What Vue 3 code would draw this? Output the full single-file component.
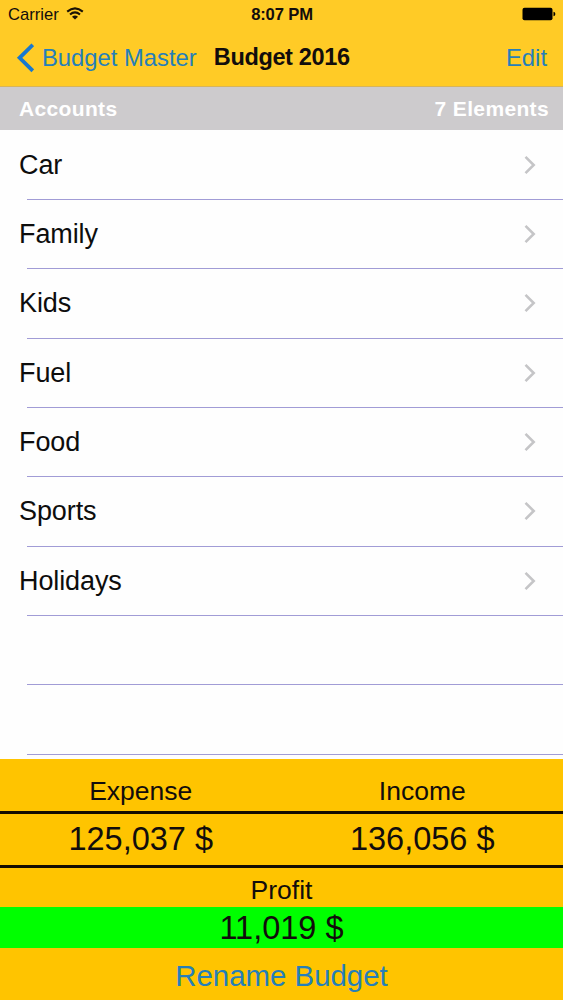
<template>
  <div class="screen">
    <header class="top">
      <div class="status-bar">
        <div class="carrier">
          <span>Carrier</span>
          <svg class="wifi" width="18" height="13" viewBox="0 0 18 13">
            <path d="M1.2 4.6 Q9 -2 16.8 4.6" />
            <path d="M4 7.5 Q9 3.3 14 7.5" />
            <path class="dot" d="M6 9.7 Q9 7.2 12 9.7 L9 12.6 Z" />
          </svg>
        </div>
        <span class="time">8:07 PM</span>
        <svg class="battery" width="34" height="14" viewBox="0 0 34 14">
          <rect x="0.5" y="0.8" width="30" height="12.4" rx="2" />
          <path d="M31.5 4.8 Q33.4 5.3 33.4 7 Q33.4 8.7 31.5 9.2 Z" />
        </svg>
      </div>
      <nav class="nav-bar">
        <button class="back">
          <svg width="18" height="30" viewBox="0 0 18 30">
            <path d="M16.8 1.8 L3.6 14.8 L16.8 27.8" />
          </svg>
          <span>Budget Master</span>
        </button>
        <h1>Budget 2016</h1>
        <button class="edit">Edit</button>
      </nav>
    </header>

    <div class="section-header">
      <span>Accounts</span>
      <span>{{ accounts.length }} Elements</span>
    </div>

    <ul class="list">
      <li v-for="account in accounts" :key="account" class="row">
        <span>{{ account }}</span>
        <svg width="12" height="20" viewBox="0 0 12 20">
          <path d="M1.5 1.8 L9.7 10 L1.5 18.2" />
        </svg>
      </li>
      <li v-for="n in 2" :key="n" class="row"></li>
    </ul>

    <footer class="summary">
      <div class="columns labels">
        <span>Expense</span>
        <span>Income</span>
      </div>
      <div class="columns amounts">
        <span>{{ format(expense) }}</span>
        <span>{{ format(income) }}</span>
      </div>
      <div class="profit-label">Profit</div>
      <div class="profit">{{ format(profit) }}</div>
      <button class="rename">Rename Budget</button>
    </footer>
  </div>
</template>

<script setup>
import { ref, computed } from 'vue'

const accounts = ref(['Car', 'Family', 'Kids', 'Fuel', 'Food', 'Sports', 'Holidays'])
const expense = ref(125037)
const income = ref(136056)
const profit = computed(() => income.value - expense.value)

const format = (value) => value.toLocaleString('en-US') + ' $'
</script>

<style>
body {
  margin: 0;
}
</style>

<style scoped>
.screen {
  display: flex;
  flex-direction: column;
  width: 563px;
  height: 1000px;
  overflow: hidden;
  background: #fefefe;
  color: #120d0c;
  font-family: "Liberation Sans", Arial, sans-serif;
}
button {
  padding: 0;
  border: none;
  background: none;
  font: inherit;
  color: #267fb9;
  cursor: pointer;
}
.top {
  height: 87px;
  flex: none;
  box-sizing: border-box;
  background: #ffcb26;
  border-bottom: 1px solid #d6b45c;
}
.status-bar {
  display: grid;
  grid-template-columns: 1fr auto 1fr;
  align-items: center;
  height: 28px;
  padding: 0 7px 0 8px;
  font-size: 16.6px;
}
.status-bar span {
  padding-top: 1px;
}
.carrier {
  display: flex;
  align-items: center;
  gap: 7px;
}
.wifi {
  margin-top: -2px;
}
.wifi path {
  fill: none;
  stroke: #1a1205;
  stroke-width: 2.1;
}
.wifi .dot {
  fill: #1a1205;
  stroke: none;
}
.time {
  font-weight: bold;
  letter-spacing: -0.15px;
}
.battery {
  justify-self: end;
  fill: #000;
}
.nav-bar {
  display: flex;
  align-items: center;
  height: 59px;
  padding: 0 16px;
  font-size: 23.8px;
}
.back {
  display: flex;
  align-items: center;
  gap: 8px;
}
.back svg path {
  fill: none;
  stroke: #1878d0;
  stroke-width: 3.8;
}
h1 {
  margin: 0 0 0 17px;
  font-size: 23.5px;
  font-weight: bold;
  letter-spacing: -0.35px;
}
.edit {
  margin-left: auto;
}
.section-header {
  display: flex;
  justify-content: space-between;
  align-items: center;
  flex: none;
  height: 43px;
  padding: 0 14px 0 19px;
  background: #cdcbcd;
  color: #fff;
  font-size: 21px;
  font-weight: bold;
  letter-spacing: 0.35px;
}
.list {
  flex: none;
  box-sizing: border-box;
  height: 629px;
  margin: 0;
  padding: 0.6px 0 0;
  list-style: none;
}
.row {
  display: flex;
  justify-content: space-between;
  align-items: center;
  box-sizing: border-box;
  height: 69.35px;
  margin-left: 27px;
  padding-right: 27px;
  border-bottom: 1px solid #a19cd6;
  color: #0d0d0d;
  font-size: 27px;
  letter-spacing: -0.1px;
}
/* titles start left of the separator */
.row span {
  margin-left: -8px;
  padding-top: 1px;
}
.row svg path {
  fill: none;
  stroke: #c5c5c7;
  stroke-width: 2.6;
}
.summary {
  display: flex;
  flex-direction: column;
  flex: 1;
  background: #ffc400;
}
.columns {
  display: grid;
  grid-template-columns: 1fr 1fr;
  align-items: center;
  box-sizing: border-box;
  text-align: center;
  border-bottom: 3px solid #140c00;
}
.labels {
  height: 55px;
  padding-top: 12px;
  font-size: 26.5px;
}
.amounts {
  height: 54px;
  font-size: 32.5px;
}
.profit-label {
  height: 39px;
  line-height: 44px;
  text-align: center;
  font-size: 26.5px;
}
.profit {
  height: 41px;
  line-height: 43px;
  text-align: center;
  font-size: 32.5px;
  background: #00ff00;
}
.rename {
  flex: 1;
  padding-top: 3px;
  font-size: 29.4px;
}
</style>
